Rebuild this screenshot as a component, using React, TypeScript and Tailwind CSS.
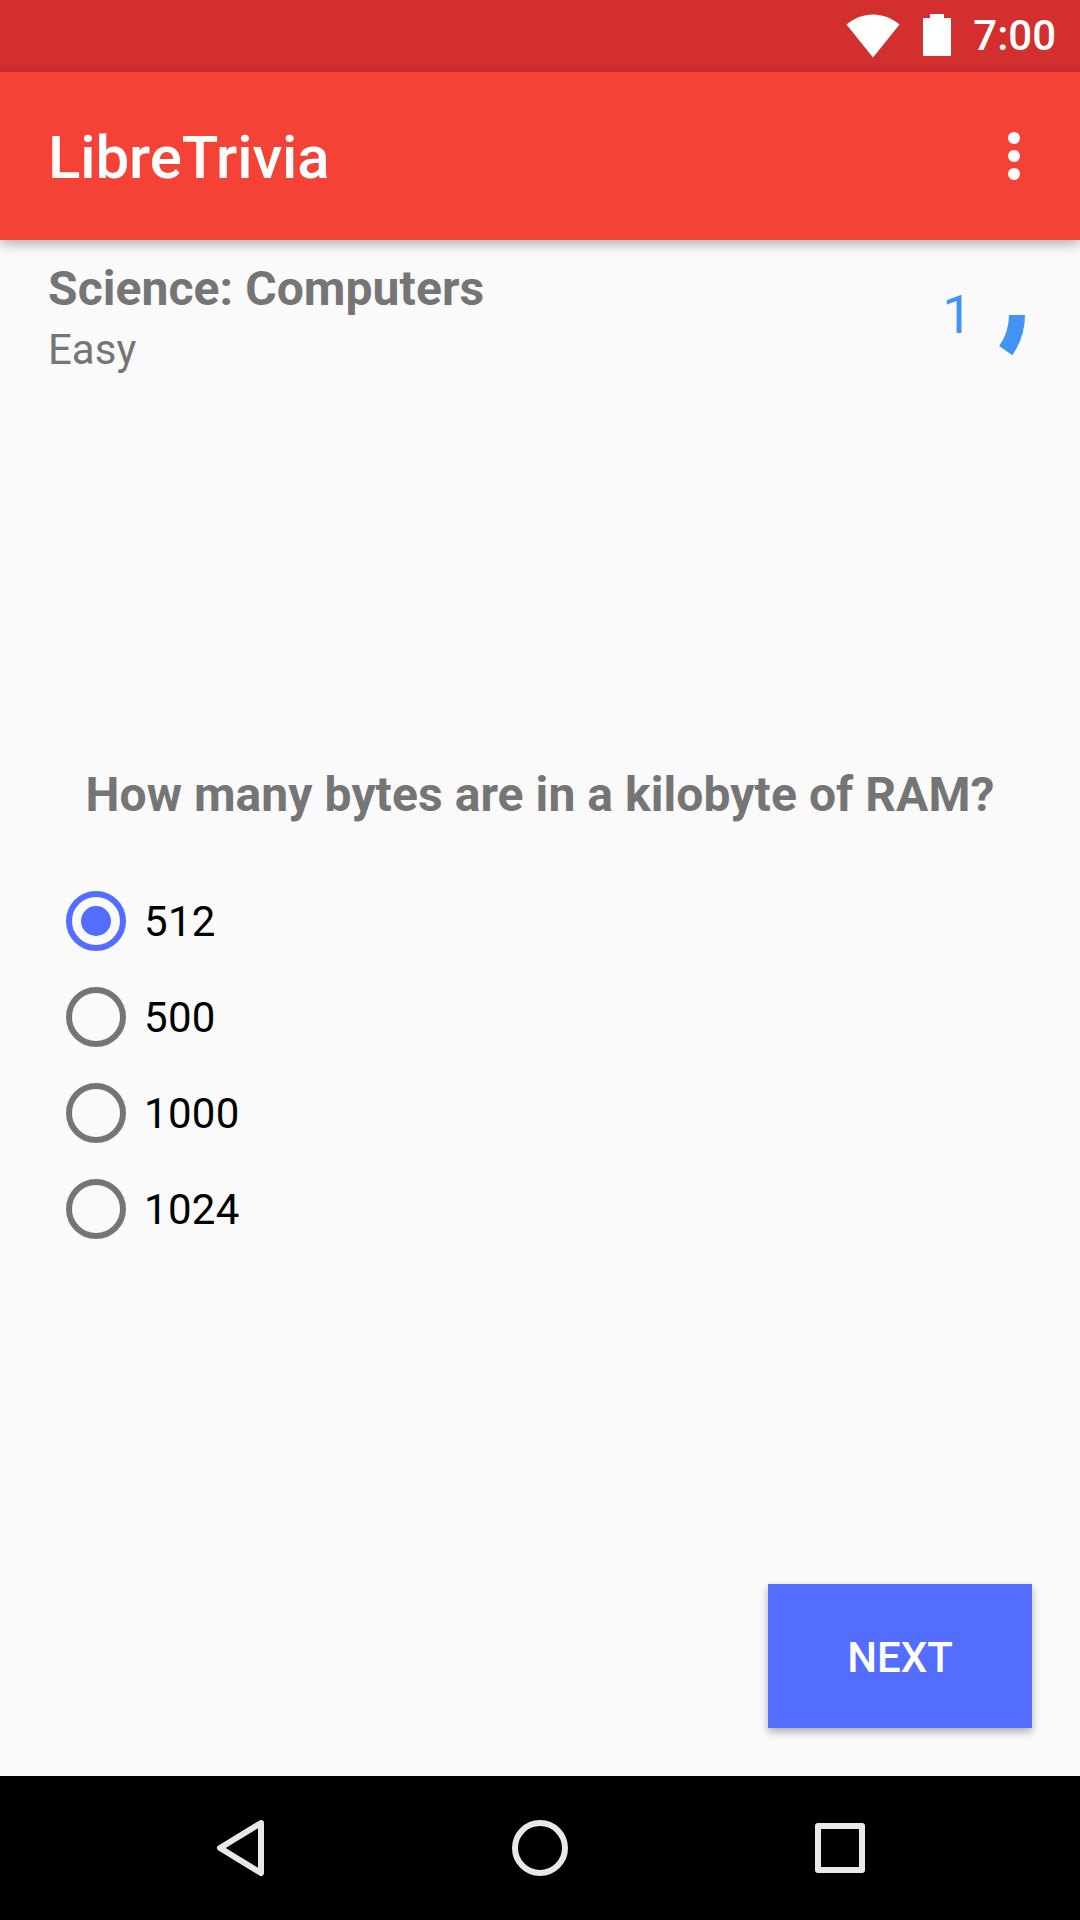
import React from "react";

const answers = ["512", "500", "1000", "1024"];

function StatusBar() {
  return (
    <div className="h-[72px] bg-[#d32f2f] flex items-center justify-end text-white pr-[24px] shrink-0">
      <svg width="54" height="44" viewBox="0 0 54 44" className="mr-[23px] mt-[-1px]">
        <path d="M0.5 10.5 C16 -3 38 -3 53.5 10.5 L27 43.5 Z" fill="#fff" />
      </svg>
      <svg width="28" height="44" viewBox="0 0 28 44" className="mr-[22px] mt-[-1px]">
        <path d="M7 0 H21 V4 H28 V42 H0 V4 H7 Z" fill="#fff" />
      </svg>
      <span className="text-[42px] leading-none font-medium font-['Roboto',sans-serif]">7:00</span>
    </div>
  );
}

function AppBar() {
  return (
    <div className="h-[168px] bg-[#f44336] flex items-center justify-between pl-[48px] pr-[60px] shrink-0 relative z-10 shadow-[0_4px_12px_rgba(0,0,0,0.3)]">
      <h1 className="text-[60px] leading-none font-medium text-white mt-[3px] tracking-[-0.1px]">LibreTrivia</h1>
      <div className="flex flex-col gap-[6px]">
        <div className="w-[12px] h-[12px] rounded-full bg-white" />
        <div className="w-[12px] h-[12px] rounded-full bg-white" />
        <div className="w-[12px] h-[12px] rounded-full bg-white" />
      </div>
    </div>
  );
}

function Timer() {
  return (
    <div className="relative w-[140px] h-[140px] mt-[5px]">
      <svg width="140" height="140" viewBox="0 0 140 140">
        <path d="M 140 70 A 70 70 0 0 1 127.3 110.2 L 114.2 101 A 54 54 0 0 0 124 70 Z" fill="#4393f3" />
      </svg>
      <span className="absolute inset-0 flex items-center justify-center pl-[5px] text-[54px] leading-none text-[#4393f3]">
        1
      </span>
    </div>
  );
}

function Radio({ checked }: { checked: boolean }) {
  if (checked) {
    return (
      <div className="w-[60px] h-[60px] rounded-full border-[6px] border-[#536dfe] flex items-center justify-center">
        <div className="w-[30px] h-[30px] rounded-full bg-[#536dfe]" />
      </div>
    );
  }
  return <div className="w-[60px] h-[60px] rounded-full border-[6px] border-[#757575]" />;
}

function NavBar() {
  return (
    <div className="h-[144px] bg-black flex items-center shrink-0 pl-[213px] pr-[215px] justify-between">
      <svg width="52" height="60" viewBox="0 0 52 60">
        <path d="M48 5 L7 30 L48 55 Z" fill="none" stroke="#e8e8e8" strokeWidth="6" strokeLinejoin="round" />
      </svg>
      <div className="w-[56px] h-[56px] rounded-full border-[6px] border-[#e8e8e8]" />
      <div className="w-[50px] h-[50px] rounded-[3px] border-[6px] border-[#e8e8e8]" />
    </div>
  );
}

export default function App() {
  return (
    <div className="w-[1080px] h-[1920px] flex flex-col bg-[#fafafa] overflow-hidden font-['Roboto',sans-serif]">
      <StatusBar />
      <AppBar />
      <main className="flex-1 flex flex-col">
        <div className="flex justify-between items-start pl-[48px] pr-[55px] h-[340px]">
          <div className="pt-[21px]">
            <h2 className="text-[48px] leading-[56px] font-bold text-[#757575] tracking-[0.08px]">Science: Computers</h2>
            <p className="text-[42px] leading-[50px] text-[#757575] mt-[8px]">Easy</p>
          </div>
          <Timer />
        </div>
        <h3 className="text-[48px] leading-[56px] font-bold text-[#757575] text-center mt-[187px] tracking-[0.07px]">
          How many bytes are in a kilobyte of RAM?
        </h3>
        <div className="flex flex-col mt-[50px] pl-[66px]">
          {answers.map((a, i) => (
            <div key={a} className="h-[96px] flex items-center gap-[18px]">
              <Radio checked={i === 0} />
              <span className="text-[42px] leading-none text-black mt-[2px] tracking-[0.3px]">{a}</span>
            </div>
          ))}
        </div>
        <div className="flex justify-end pr-[48px] mt-auto pb-[48px]">
          <button className="w-[264px] h-[144px] pt-[2px] bg-[#536dfe] text-white text-[42px] font-medium shadow-[0_4px_8px_rgba(0,0,0,0.3)]">
            NEXT
          </button>
        </div>
      </main>
      <NavBar />
    </div>
  );
}
